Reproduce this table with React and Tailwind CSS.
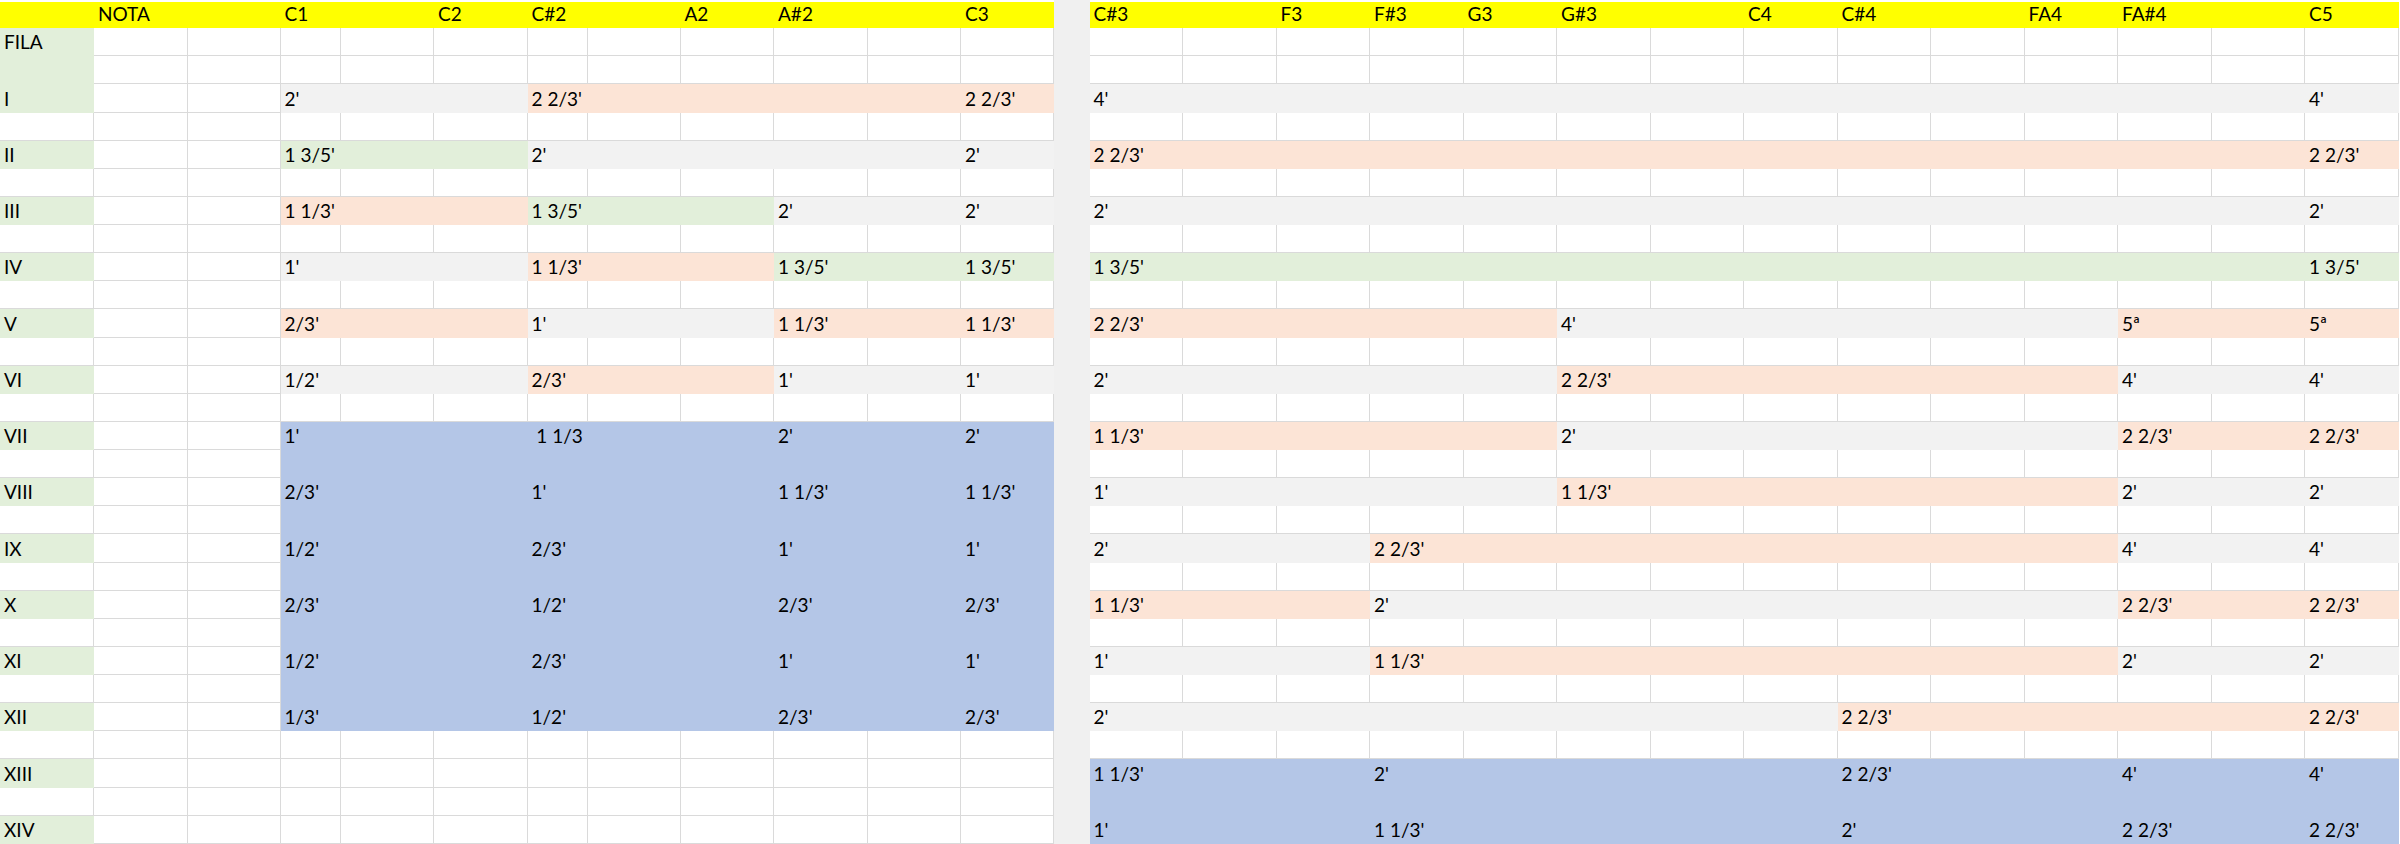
const FILL = {
  ".": "bg-white border-[#dadada]",
  g: "bg-[#e2efda] border-transparent",
  s: "bg-[#f2f2f2] border-transparent",
  p: "bg-[#fce4d6] border-transparent",
  b: "bg-[#b4c6e7] border-transparent",
  y: "bg-[#ffff00] border-transparent",
};

// column widths as measured on the sheet (two narrow ones in the left table)
const LEFT_COLS = [
  "w-[94px]",
  "w-[93.5px]",
  "w-[93px]",
  "w-[60px]",
  "w-[93.5px]",
  "w-[93.5px]",
  "w-[60px]",
  "w-[93px]",
  "w-[93.5px]",
  "w-[93.5px]",
  "w-[93.5px]",
  "w-[92.5px]",
];

const RIGHT_COLS = Array(14).fill("w-[93.5px]");

const fills = (...parts) =>
  parts.map(([c, n]) => c.repeat(n)).join("");

const LEFT_HEAD = {
  1: "NOTA",
  3: "C1",
  5: "C2",
  6: "C#2",
  8: "A2",
  9: "A#2",
  11: "C3",
};

const RIGHT_HEAD = {
  0: "C#3",
  2: "F3",
  3: "F#3",
  4: "G3",
  5: "G#3",
  7: "C4",
  8: "C#4",
  10: "FA4",
  11: "FA#4",
  13: "C5",
};

const EMPTY_L = fills([".", 12]);
const LABEL_L = fills(["g", 1], [".", 11]);
const BLUE_L = (label) =>
  fills([label ? "g" : ".", 1], [".", 2], ["b", 9]);

const LEFT_ROWS = [
  { f: LABEL_L, t: { 0: "FILA" } },
  { f: LABEL_L, t: {} },
  {
    f: fills(["g", 1], [".", 2], ["s", 3], ["p", 6]),
    t: { 0: "I", 3: "2'", 6: "2 2/3'", 11: "2 2/3'" },
  },
  { f: EMPTY_L, t: {} },
  {
    f: fills(["g", 1], [".", 2], ["g", 3], ["s", 6]),
    t: { 0: "II", 3: "1 3/5'", 6: "2'", 11: "2'" },
  },
  { f: EMPTY_L, t: {} },
  {
    f: fills(["g", 1], [".", 2], ["p", 3], ["g", 3], ["s", 3]),
    t: { 0: "III", 3: "1 1/3'", 6: "1 3/5'", 9: "2'", 11: "2'" },
  },
  { f: EMPTY_L, t: {} },
  {
    f: fills(["g", 1], [".", 2], ["s", 3], ["p", 3], ["g", 3]),
    t: { 0: "IV", 3: "1'", 6: "1 1/3'", 9: "1 3/5'", 11: "1 3/5'" },
  },
  { f: EMPTY_L, t: {} },
  {
    f: fills(["g", 1], [".", 2], ["p", 3], ["s", 3], ["p", 3]),
    t: { 0: "V", 3: "2/3'", 6: "1'", 9: "1 1/3'", 11: "1 1/3'" },
  },
  { f: EMPTY_L, t: {} },
  {
    f: fills(["g", 1], [".", 2], ["s", 3], ["p", 3], ["s", 3]),
    t: { 0: "VI", 3: "1/2'", 6: "2/3'", 9: "1'", 11: "1'" },
  },
  { f: EMPTY_L, t: {} },
  {
    f: BLUE_L(true),
    t: { 0: "VII", 3: "1'", 6: " 1 1/3", 9: "2'", 11: "2'" },
  },
  { f: BLUE_L(false), t: {} },
  {
    f: BLUE_L(true),
    t: { 0: "VIII", 3: "2/3'", 6: "1'", 9: "1 1/3'", 11: "1 1/3'" },
  },
  { f: BLUE_L(false), t: {} },
  {
    f: BLUE_L(true),
    t: { 0: "IX", 3: "1/2'", 6: "2/3'", 9: "1'", 11: "1'" },
  },
  { f: BLUE_L(false), t: {} },
  {
    f: BLUE_L(true),
    t: { 0: "X", 3: "2/3'", 6: "1/2'", 9: "2/3'", 11: "2/3'" },
  },
  { f: BLUE_L(false), t: {} },
  {
    f: BLUE_L(true),
    t: { 0: "XI", 3: "1/2'", 6: "2/3'", 9: "1'", 11: "1'" },
  },
  { f: BLUE_L(false), t: {} },
  {
    f: BLUE_L(true),
    t: { 0: "XII", 3: "1/3'", 6: "1/2'", 9: "2/3'", 11: "2/3'" },
  },
  { f: EMPTY_L, t: {} },
  { f: LABEL_L, t: { 0: "XIII" } },
  { f: EMPTY_L, t: {} },
  { f: LABEL_L, t: { 0: "XIV" } },
];

const EMPTY_R = fills([".", 14]);

const RIGHT_ROWS = [
  { f: EMPTY_R, t: {} },
  { f: EMPTY_R, t: {} },
  { f: fills(["s", 14]), t: { 0: "4'", 13: "4'" } },
  { f: EMPTY_R, t: {} },
  { f: fills(["p", 14]), t: { 0: "2 2/3'", 13: "2 2/3'" } },
  { f: EMPTY_R, t: {} },
  { f: fills(["s", 14]), t: { 0: "2'", 13: "2'" } },
  { f: EMPTY_R, t: {} },
  { f: fills(["g", 14]), t: { 0: "1 3/5'", 13: "1 3/5'" } },
  { f: EMPTY_R, t: {} },
  {
    f: fills(["p", 5], ["s", 6], ["p", 3]),
    t: { 0: "2 2/3'", 5: "4'", 11: "5ª", 13: "5ª" },
  },
  { f: EMPTY_R, t: {} },
  {
    f: fills(["s", 5], ["p", 6], ["s", 3]),
    t: { 0: "2'", 5: "2 2/3'", 11: "4'", 13: "4'" },
  },
  { f: EMPTY_R, t: {} },
  {
    f: fills(["p", 5], ["s", 6], ["p", 3]),
    t: { 0: "1 1/3'", 5: "2'", 11: "2 2/3'", 13: "2 2/3'" },
  },
  { f: EMPTY_R, t: {} },
  {
    f: fills(["s", 5], ["p", 6], ["s", 3]),
    t: { 0: "1'", 5: "1 1/3'", 11: "2'", 13: "2'" },
  },
  { f: EMPTY_R, t: {} },
  {
    f: fills(["s", 3], ["p", 8], ["s", 3]),
    t: { 0: "2'", 3: "2 2/3'", 11: "4'", 13: "4'" },
  },
  { f: EMPTY_R, t: {} },
  {
    f: fills(["p", 3], ["s", 8], ["p", 3]),
    t: { 0: "1 1/3'", 3: "2'", 11: "2 2/3'", 13: "2 2/3'" },
  },
  { f: EMPTY_R, t: {} },
  {
    f: fills(["s", 3], ["p", 8], ["s", 3]),
    t: { 0: "1'", 3: "1 1/3'", 11: "2'", 13: "2'" },
  },
  { f: EMPTY_R, t: {} },
  {
    f: fills(["s", 8], ["p", 6]),
    t: { 0: "2'", 8: "2 2/3'", 13: "2 2/3'" },
  },
  { f: EMPTY_R, t: {} },
  {
    f: fills(["b", 14]),
    t: { 0: "1 1/3'", 3: "2'", 8: "2 2/3'", 11: "4'", 13: "4'" },
  },
  { f: fills(["b", 14]), t: {} },
  {
    f: fills(["b", 14]),
    t: { 0: "1'", 3: "1 1/3'", 8: "2'", 11: "2 2/3'", 13: "2 2/3'" },
  },
];

function Cell({ width, fill, text }) {
  return (
    <div
      className={`flex shrink-0 items-end border-r border-b pb-[4px] pl-[4px] whitespace-pre ${width} ${FILL[fill]}`}
    >
      {text}
    </div>
  );
}

function HeaderRow({ cols, labels }) {
  return (
    <div className="flex h-[28.125px] flex-col">
      <div className="h-[1.5px] bg-white" />
      <div className="flex flex-1">
        {cols.map((w, i) => (
          <Cell key={i} width={w} fill="y" text={labels[i]} />
        ))}
      </div>
    </div>
  );
}

function Sheet({ cols, head, rows, className }) {
  return (
    <div className={`flex shrink-0 flex-col ${className}`}>
      <HeaderRow cols={cols} labels={head} />

      {rows.map((row, r) => (
        <div key={r} className="flex h-[28.125px]">
          {cols.map((w, i) => (
            <Cell
              key={i}
              width={w}
              fill={row.f[i]}
              text={row.t[i]}
            />
          ))}
        </div>
      ))}
    </div>
  );
}

export default function App() {
  return (
    <div className="flex h-[844px] w-[2400px] overflow-hidden bg-white font-[family-name:Lato,sans-serif] text-[19px] leading-[19px] text-black">
      <Sheet
        cols={LEFT_COLS}
        head={LEFT_HEAD}
        rows={LEFT_ROWS}
        className="w-[1053.5px]"
      />

      <div className="w-[36px] shrink-0 bg-[#f0f0f0]" />

      <Sheet
        cols={RIGHT_COLS}
        head={RIGHT_HEAD}
        rows={RIGHT_ROWS}
        className="w-[1309px]"
      />
    </div>
  );
}
